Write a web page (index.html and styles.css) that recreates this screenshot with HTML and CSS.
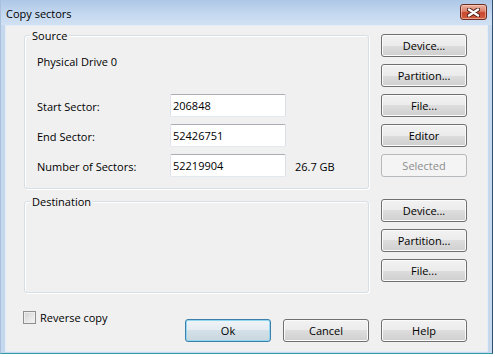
FILE: index.html
```html
<!DOCTYPE html>
<html lang="en">
<head>
    <meta charset="utf-8">
    <title>Copy sectors</title>
    <link rel="stylesheet" href="styles.css">
</head>
<body>
    <div class="frame">
        <div class="titlebar">
            <span class="title">Copy sectors</span>
            <span class="close">
                <svg width="13" height="9" viewBox="0 0 13 9">
                    <path d="M2 1.5 L11 7.5 M11 1.5 L2 7.5" stroke="#4a1c14" stroke-width="4.2" stroke-linecap="round"/>
                    <path d="M2 1.5 L11 7.5 M11 1.5 L2 7.5" stroke="#ffffff" stroke-width="2.4" stroke-linecap="round"/>
                </svg>
            </span>
        </div>

        <div class="client">
            <div class="layout">
                <div class="group source">
                    <div class="group-title">Source</div>
                    <div class="drive">Physical Drive 0</div>
                    <div class="rows">
                        <div class="row">
                            <span class="label">Start Sector:</span>
                            <input class="field" type="text" value="206848">
                        </div>
                        <div class="row">
                            <span class="label">End Sector:</span>
                            <input class="field" type="text" value="52426751">
                        </div>
                        <div class="row">
                            <span class="label">Number of Sectors:</span>
                            <input class="field" type="text" value="52219904">
                            <span class="unit">26.7 GB</span>
                        </div>
                    </div>
                </div>
                <div class="buttons">
                    <button class="btn">Device...</button>
                    <button class="btn">Partition...</button>
                    <button class="btn">File...</button>
                    <button class="btn">Editor</button>
                    <button class="btn" disabled>Selected</button>
                </div>

                <div class="group dest">
                    <div class="group-title">Destination</div>
                </div>
                <div class="buttons">
                    <button class="btn">Device...</button>
                    <button class="btn">Partition...</button>
                    <button class="btn">File...</button>
                </div>
            </div>

            <div class="footer">
                <label class="check">
                    <span class="box"></span>
                    Reverse copy
                </label>
                <div class="actions">
                    <button class="btn default">Ok</button>
                    <button class="btn">Cancel</button>
                    <button class="btn">Help</button>
                </div>
            </div>
        </div>
    </div>
</body>
</html>
```

FILE: styles.css
```css
body {
    margin: 0;
    background-color: #ffffff;
    font-family: 'Open Sans', 'Liberation Sans', sans-serif;
    font-size: 11px;
    line-height: 15px;
    color: #000000;
}

.frame {
    width: 491px;
    background-color: #c6d8ee;
    border-left: 1px solid #a9c1dd;
    border-right: 1px solid #34506f;
    border-bottom: 1px solid #2e9ea3;
}

.titlebar {
    height: 25px;
    display: flex;
    justify-content: space-between;
    align-items: flex-start;
    background: linear-gradient(#adc7e7, #c4d8ef 55%, #d2e1f3);
}

.title {
    margin: 6px 0 0 5px;
}

.close {
    width: 25px;
    height: 14px;
    margin: 4px 5px 0 0;
    display: flex;
    align-items: center;
    justify-content: center;
    border: 1px solid #6e2b1f;
    border-radius: 3px;
    background: linear-gradient(#eab2a3, #dc8068 45%, #c9462d 55%, #d0603f);
    box-shadow: inset 0 0 0 1px rgba(255, 220, 210, 0.5);
}

.client {
    box-sizing: border-box;
    height: 327px;
    margin: 0 4px 1px 4px;
    padding: 8px 20px 0 18px;
    background-color: #f0f0f0;
    border: 1px solid #e4edf7;
}

.layout {
    display: grid;
    grid-template-columns: 345px 86px;
    column-gap: 12px;
    row-gap: 10px;
    align-items: start;
}

.group {
    box-sizing: border-box;
    border: 1px solid #d5dfe5;
    border-radius: 3px;
    box-shadow: inset 1px 1px 0 #ffffff, 1px 1px 0 #ffffff;
    padding-left: 12px;
}

.source {
    height: 154px;
    margin-top: 1px;
}

.dest {
    height: 92px;
    margin-top: 2px;
}

.group-title {
    width: max-content;
    margin: -8px 0 0 -7px;
    padding: 0 2px;
    background-color: #f0f0f0;
}

.drive {
    margin-top: 11px;
}

.rows {
    margin-top: 25px;
    display: flex;
    flex-direction: column;
    gap: 7px;
}

.row {
    height: 23px;
    display: flex;
    align-items: center;
}

.label {
    width: 133px;
    padding-top: 2px;
}

.field {
    box-sizing: border-box;
    width: 116px;
    height: 23px;
    margin: 0;
    padding: 0 2px;
    font: inherit;
    color: #000000;
    background-color: #ffffff;
    border: 1px solid;
    border-color: #abadb3 #dbdfe6 #e3e9ef #e2e3ea;
    border-radius: 2px;
    outline: none;
}

.unit {
    margin-left: 9px;
    padding-top: 1px;
}

.buttons {
    display: flex;
    flex-direction: column;
    gap: 7px;
}

.btn {
    box-sizing: border-box;
    width: 86px;
    height: 23px;
    margin: 0;
    padding: 0;
    font: inherit;
    color: #000000;
    border: 1px solid #707070;
    border-radius: 3px;
    background: linear-gradient(#f2f2f2, #ebebeb 50%, #dddddd 50%, #cfcfcf);
    box-shadow: inset 0 0 0 1px #fbfbfb;
}

.btn:disabled {
    color: #8d8d8d;
    border-color: #b5b9bc;
    background: #f4f4f4;
    box-shadow: none;
}

.btn.default {
    border-color: #3c7fab;
    background: linear-gradient(#eef3f6, #e4ecf1 50%, #d4e0e7 50%, #c8d6de);
    box-shadow: inset 0 0 0 1px #8fd8f0;
}

.footer {
    margin: 17px 0 0 -1px;
    display: flex;
    justify-content: space-between;
    align-items: flex-start;
}

.check {
    display: flex;
    align-items: center;
    gap: 4px;
}

.box {
    box-sizing: border-box;
    width: 13px;
    height: 13px;
    border: 1px solid #8e8f8f;
    background: linear-gradient(135deg, #d2d2d2, #f6f6f6);
    box-shadow: inset 0 0 0 1px #eeeeee;
}

.actions {
    margin-top: 9px;
    display: flex;
    gap: 12px;
}
```
